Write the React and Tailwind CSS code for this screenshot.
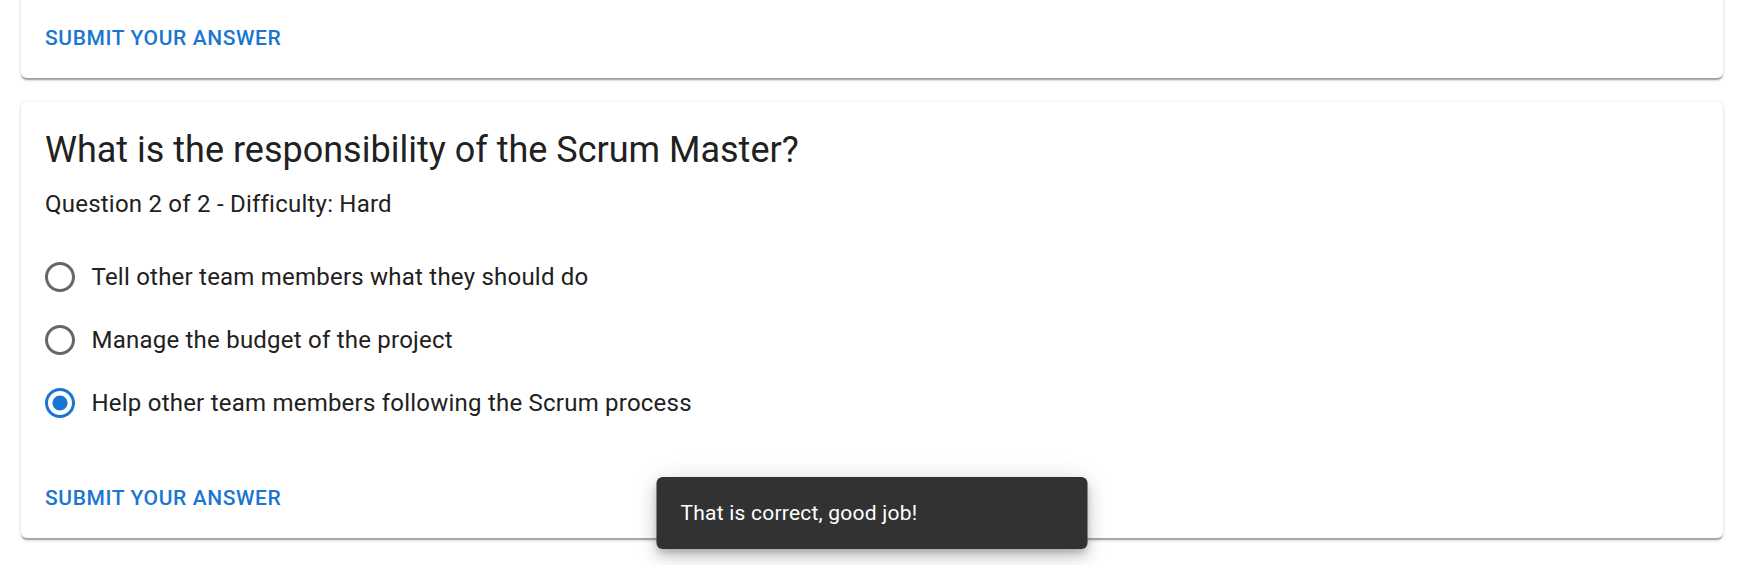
import React from "react";

function RadioIcon({ checked }) {
  return (
    <svg
      viewBox="0 0 24 24"
      className="w-[36px] h-[36px] shrink-0 -ml-[3px]"
      fill={checked ? "#1976d2" : "#666666"}
    >
      <path d="M12 2C6.48 2 2 6.48 2 12s4.48 10 10 10 10-4.48 10-10S17.52 2 12 2zm0 18c-4.42 0-8-3.58-8-8s3.58-8 8-8 8 3.58 8 8-3.58 8-8 8z" />
      {checked && (
        <path d="M8.465 8.465C9.37 7.56 10.62 7 12 7C14.76 7 17 9.24 17 12C17 13.38 16.44 14.63 15.535 15.535C14.63 16.44 13.38 17 12 17C9.24 17 7 14.76 7 12C7 10.62 7.56 9.37 8.465 8.465Z" />
      )}
    </svg>
  );
}

function SubmitButton() {
  return (
    <div className="p-[12px] flex">
      <button className="px-[12px] py-[9px] text-[21px] leading-[36.75px] font-medium uppercase tracking-[0.6px] text-[#1976d2] rounded-[6px]">
        Submit your answer
      </button>
    </div>
  );
}

const cardCls =
  "bg-white rounded-[6px] shadow-[0_3px_1.5px_-1.5px_rgba(0,0,0,0.2),0_1.5px_1.5px_0_rgba(0,0,0,0.14),0_1.5px_4.5px_0_rgba(0,0,0,0.12)]";

export default function App() {
  const options = [
    "Tell other team members what they should do",
    "Manage the budget of the project",
    "Help other team members following the Scrum process",
  ];
  return (
    <div
      className="relative w-full h-[565px] overflow-hidden bg-white text-[#212121]"
      style={{ fontFamily: "Roboto, 'Noto Sans', sans-serif" }}
    >
      <div className="px-[21px] flex flex-col gap-[24px] -mt-[27px]">
        <div className={`${cardCls} pt-[26px]`}>
          <SubmitButton />
        </div>
        <div className={cardCls}>
          <div className="p-[24px]">
            <h5 className="text-[36px] leading-[48px] font-normal mb-[12px]">
              What is the responsibility of the Scrum Master?
            </h5>
            <p className="text-[24px] leading-[36px] tracking-[0.225px]">
              Question 2 of 2 - Difficulty: Hard
            </p>
            <div className="mt-[24px] flex flex-col">
              {options.map((o, i) => (
                <label key={i} className="h-[63px] flex items-center">
                  <RadioIcon checked={i === 2} />
                  <span className="ml-[13.5px] text-[24px] leading-[36px] tracking-[0.225px]">
                    {o}
                  </span>
                </label>
              ))}
            </div>
          </div>
          <SubmitButton />
        </div>
      </div>
      <div className="absolute bottom-[16px] left-1/2 -translate-x-1/2 w-[431px] px-[24px] py-[9px] bg-[#323232] text-white rounded-[6px] shadow-[0_4.5px_7.5px_-1.5px_rgba(0,0,0,0.2),0_9px_15px_0_rgba(0,0,0,0.14),0_1.5px_27px_0_rgba(0,0,0,0.12)]">
        <div className="py-[12px] text-[21px] leading-[30px] tracking-[0.22px]">
          That is correct, good job!
        </div>
      </div>
    </div>
  );
}
